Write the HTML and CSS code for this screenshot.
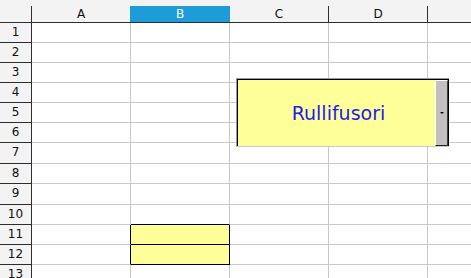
FILE: index.html
```html
<!DOCTYPE html>
<html lang="it">
<head>
    <meta charset="UTF-8">
    <title>Foglio1</title>
    <link rel="stylesheet" href="styles.css">
</head>
<body>
    <div class="sheet">
        <div class="colhead">
            <div class="corner"></div>
            <div class="ch ch-before-sel">A</div>
            <div class="ch sel">B</div>
            <div class="ch">C</div>
            <div class="ch">D</div>
            <div class="ch last"></div>
        </div>

        <div class="row"><div class="rh">1</div><div class="c"></div><div class="c"></div><div class="c"></div><div class="c"></div><div class="c last"></div></div>
        <div class="row"><div class="rh">2</div><div class="c"></div><div class="c"></div><div class="c"></div><div class="c"></div><div class="c last"></div></div>
        <div class="row"><div class="rh">3</div><div class="c"></div><div class="c"></div><div class="c"></div><div class="c"></div><div class="c last"></div></div>
        <div class="row"><div class="rh">4</div><div class="c"></div><div class="c"></div><div class="c"></div><div class="c"></div><div class="c last"></div></div>
        <div class="row"><div class="rh">5</div><div class="c"></div><div class="c"></div><div class="c"></div><div class="c"></div><div class="c last"></div></div>
        <div class="row"><div class="rh">6</div><div class="c"></div><div class="c"></div><div class="c"></div><div class="c"></div><div class="c last"></div></div>
        <div class="row tall"><div class="rh">7</div><div class="c"></div><div class="c"></div><div class="c"></div><div class="c"></div><div class="c last"></div></div>
        <div class="row"><div class="rh">8</div><div class="c"></div><div class="c"></div><div class="c"></div><div class="c"></div><div class="c last"></div></div>
        <div class="row tall"><div class="rh">9</div><div class="c"></div><div class="c"></div><div class="c"></div><div class="c"></div><div class="c last"></div></div>
        <div class="row"><div class="rh">10</div><div class="c"></div><div class="c edge-b"></div><div class="c"></div><div class="c"></div><div class="c last"></div></div>
        <div class="row"><div class="rh">11</div><div class="c edge-r"></div><div class="c hl"></div><div class="c"></div><div class="c"></div><div class="c last"></div></div>
        <div class="row"><div class="rh">12</div><div class="c edge-r"></div><div class="c hl"></div><div class="c"></div><div class="c"></div><div class="c last"></div></div>
        <div class="row"><div class="rh">13</div><div class="c"></div><div class="c"></div><div class="c"></div><div class="c"></div><div class="c last"></div></div>

        <!-- casella combinata sopra le celle C4:D6 -->
        <div class="combo">
            <div class="combo-in">
                <div class="combo-text">Rullifusori</div>
                <div class="combo-btn"><span class="arrow"></span></div>
            </div>
        </div>
    </div>
</body>
</html>
```

FILE: styles.css
```css
* {
    box-sizing: border-box;
}

body {
    font-family: "DejaVu Sans", "Liberation Sans", sans-serif;
    margin: 0;
    padding: 0;
    overflow: hidden;
    background: #ffffff;
}

.sheet {
    position: relative;
    width: 471px;
    height: 278px;
    overflow: hidden;
}

.colhead {
    display: flex;
    height: 23px;
    padding-top: 6px;
    background: #f3f3f3;
    border-bottom: 1px solid #2e2e2e;
}

.corner {
    width: 32px;
    border-right: 1px solid #2e2e2e;
}

.ch {
    width: 99px;
    height: 16px;
    line-height: 16px;
    text-align: center;
    font-size: 12px;
    color: #111;
    border-right: 1px solid #2e2e2e;
}

.ch-before-sel {
    border-right-color: #1e9cd8;
}

.ch.sel {
    background: #1e9cd8;
    color: #fff;
    border-right-color: #1e9cd8;
}

.ch.last,
.c.last {
    flex: 1;
    border-right: none;
}

.row {
    display: flex;
    height: 20px;
}

.row.tall {
    height: 21px;
}

.rh {
    width: 32px;
    background: #f3f3f3;
    border-right: 1px solid #2e2e2e;
    border-bottom: 1px solid #2e2e2e;
    text-align: center;
    font-size: 12px;
    line-height: 19px;
    color: #111;
}

.c {
    width: 99px;
    border-right: 1px solid #c8c8c8;
    border-bottom: 1px solid #c8c8c8;
}

.c.edge-b {
    border-bottom-color: #000;
}

.c.edge-r {
    border-right-color: #000;
}

.c.hl {
    background: #ffff99;
    border-right-color: #000;
    border-bottom-color: #000;
}

.combo {
    position: absolute;
    left: 236px;
    top: 78px;
    width: 213px;
    height: 69px;
    border-top: 1px solid #9a9a9a;
    border-left: 1px solid #9a9a9a;
    border-bottom: 1px solid #c8c8c8;
}

.combo-in {
    display: flex;
    height: 100%;
    border-top: 1px solid #000;
    border-left: 1px solid #000;
    border-right: 1px solid #000;
    background: #ffff99;
}

.combo-text {
    flex: 1;
    display: flex;
    align-items: center;
    justify-content: center;
    padding-left: 4px;
    font-size: 19px;
    color: #1c1cf2;
}

.combo-btn {
    width: 13px;
    background: #c0c0c0;
    border-top: 1px solid #fff;
    border-left: 1px solid #fff;
    border-right: 1px solid #404040;
    border-bottom: 1px solid #202020;
    display: flex;
    align-items: center;
    justify-content: center;
}

.arrow {
    width: 0;
    height: 0;
    border-left: 2px solid transparent;
    border-right: 2px solid transparent;
    border-top: 2px solid #000;
}
```
